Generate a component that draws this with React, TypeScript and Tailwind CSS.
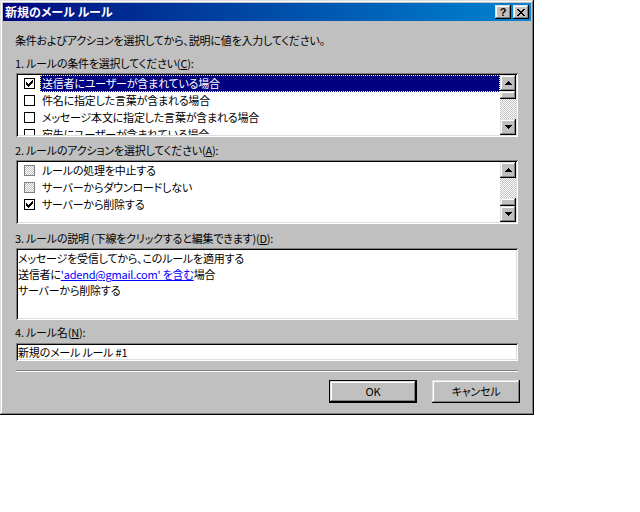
import React from "react";

const raised =
  "bg-[#c0c0c0] shadow-[inset_-1px_-1px_#000,inset_1px_1px_#dfdfdf,inset_-2px_-2px_#808080,inset_2px_2px_#fff]";
const sunken =
  "shadow-[inset_1px_1px_#808080,inset_-1px_-1px_#fff,inset_2px_2px_#000,inset_-2px_-2px_#dfdfdf]";
const hatch =
  "bg-[image:repeating-conic-gradient(#c0c0c0_0%_25%,#ffffff_0%_50%)] bg-[length:2px_2px]";

const CHECK = ["......#", ".....##", "#...###", "##.###.", "#####..", ".###...", "..#...."];

function PixelArt({ rows, color = "#000" }: { rows: string[]; color?: string }) {
  return (
    <svg width={rows[0].length} height={rows.length} shapeRendering="crispEdges">
      {rows.flatMap((r, y) =>
        r.split("").map((c, x) => (c === "#" ? <rect key={`${x}-${y}`} x={x} y={y} width={1} height={1} fill={color} /> : null))
      )}
    </svg>
  );
}

function CheckBox({ state }: { state: "on" | "off" | "gray" }) {
  return (
    <span
      className={
        "w-[11px] h-[11px] border flex items-center justify-center shrink-0 " +
        (state === "gray" ? "border-[#808080] " + hatch : "border-black bg-white")
      }
    >
      {state === "on" && <PixelArt rows={CHECK} />}
    </span>
  );
}

function Arrow({ up }: { up?: boolean }) {
  const rows = up ? ["...#...", "..###..", ".#####.", "#######"] : ["#######", ".#####.", "..###..", "...#..."];
  return <PixelArt rows={rows} />;
}

function ScrollBar({ thumbTop }: { thumbTop: boolean }) {
  const thumb = <div className={"h-[8px] shrink-0 " + raised} />;
  const track = <div className={"flex-1 " + hatch} />;
  return (
    <div className="w-4 flex flex-col shrink-0">
      <div className={"h-4 shrink-0 flex items-center justify-center " + raised}>
        <Arrow up />
      </div>
      {thumbTop ? thumb : track}
      {thumbTop ? track : thumb}
      <div className={"h-4 shrink-0 flex items-center justify-center " + raised}>
        <Arrow />
      </div>
    </div>
  );
}

type Row = { text: string; state: "on" | "off" | "gray"; selected?: boolean };

function CheckList({ rows, thumbTop }: { rows: Row[]; thumbTop: boolean }) {
  return (
    <div className={"w-[502px] h-[64px] p-[2px] flex " + sunken}>
      <div className="flex-1 bg-white overflow-hidden flex flex-col">
        {rows.map((r) => (
          <div key={r.text} className="h-[17px] shrink-0 flex items-center pl-[6px]">
            <CheckBox state={r.state} />
            <span
              className={
                "ml-[5px] flex-1 h-[17px] pl-[2px] flex items-center whitespace-nowrap " +
                (r.selected
                  ? "bg-[#000080] text-white outline-1 outline-dotted outline-[#ffff80] -outline-offset-1"
                  : "")
              }
            >
              {r.text}
            </span>
          </div>
        ))}
      </div>
      <ScrollBar thumbTop={thumbTop} />
    </div>
  );
}

function Label({ children }: { children: React.ReactNode }) {
  return <div className="h-4 leading-4 -ml-px whitespace-nowrap">{children}</div>;
}

export default function App() {
  return (
    <div className="w-[640px] h-[512px] bg-white font-['Noto_Sans_CJK_JP',sans-serif] text-[11px] tracking-[-0.2px] text-black [font-feature-settings:'palt']">
      <div className="w-[534px] h-[415px] p-[3px] bg-[#c0c0c0] shadow-[inset_-1px_-1px_#000,inset_1px_1px_#dfdfdf,inset_-2px_-2px_#808080,inset_2px_2px_#fff] flex flex-col">
        {/* Title bar */}
        <div className="h-[18px] shrink-0 bg-linear-to-r from-[#000080] to-[#1084d0] flex items-center pl-[2px] pr-[2px]">
          <span className="text-white font-bold text-[12px] tracking-normal leading-[18px] flex-1">新規のメール ルール</span>
          <div className={"w-4 h-[14px] flex items-center justify-center " + raised}>
            <span className="font-['Liberation_Sans',sans-serif] font-bold text-[11px] leading-none">?</span>
          </div>
          <div className={"w-4 h-[14px] ml-[2px] flex items-center justify-center " + raised}>
            <PixelArt rows={["##....##", ".##..##.", "..####..", "...##...", "..####..", ".##..##.", "##....##"]} />
          </div>
        </div>

        {/* Body */}
        <div className="flex flex-col pl-[13px]">
          <div className="mt-[11px]">
            <Label>条件およびアクションを選択してから、説明に値を入力してください。</Label>
          </div>
          <div className="mt-[7px]">
            <Label>
              1. ルールの条件を選択してください(<u>C</u>):
            </Label>
          </div>
          <div className="mt-[2px]">
            <CheckList
              thumbTop
              rows={[
                { text: "送信者にユーザーが含まれている場合", state: "on", selected: true },
                { text: "件名に指定した言葉が含まれる場合", state: "off" },
                { text: "メッセージ本文に指定した言葉が含まれる場合", state: "off" },
                { text: "宛先にユーザーが含まれている場合", state: "off" },
              ]}
            />
          </div>
          <div className="mt-[5px]">
            <Label>
              2. ルールのアクションを選択してください(<u>A</u>):
            </Label>
          </div>
          <div className="mt-[2px]">
            <CheckList
              thumbTop={false}
              rows={[
                { text: "ルールの処理を中止する", state: "gray" },
                { text: "サーバーからダウンロードしない", state: "gray" },
                { text: "サーバーから削除する", state: "on" },
              ]}
            />
          </div>
          <div className="mt-[6px]">
            <Label>
              3. ルールの説明 (下線をクリックすると編集できます)(<u>D</u>):
            </Label>
          </div>
          <div className={"mt-[2px] w-[502px] h-[72px] p-[2px] " + sunken}>
            <div className="h-full bg-white leading-4 whitespace-nowrap">
              <div>メッセージを受信してから、このルールを適用する</div>
              <div>
                送信者に<span className="text-[#0000ff] underline">'adend@gmail.com' を含む</span>場合
              </div>
              <div>サーバーから削除する</div>
            </div>
          </div>
          <div className="mt-[4px]">
            <Label>
              4. ルール名(<u>N</u>):
            </Label>
          </div>
          <div className={"mt-[3px] w-[502px] h-[18px] p-[2px] " + sunken}>
            <div className="h-full bg-white leading-[14px] whitespace-nowrap">新規のメール ルール #1</div>
          </div>
          <div className="mt-[9px] w-[502px] h-[2px] border-t border-t-[#808080] border-b border-b-white" />
          <div className="mt-[8px] w-[504px] flex justify-end gap-[15px]">
            <div className="w-[88px] h-[23px] border border-black">
              <div className={"w-full h-full flex items-center justify-center " + raised}>OK</div>
            </div>
            <div className={"w-[88px] h-[23px] flex items-center justify-center " + raised}>キャンセル</div>
          </div>
        </div>
      </div>
    </div>
  );
}
